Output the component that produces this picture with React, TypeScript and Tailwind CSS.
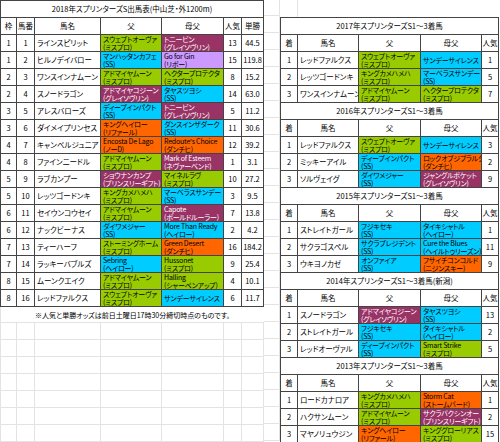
type Tone = 'g' | 'c' | 'm' | 'o' | 'p'
type Sire = [string, string | null, Tone]

const tone: Record<Tone, string> = {
  g: 'bg-[#99cc00] text-black',
  c: 'bg-[#00ccff] text-black',
  m: 'bg-[#993366] text-white',
  o: 'bg-[#ff6600] text-black',
  p: 'bg-[#cc99ff] text-black',
}

const entries: { waku: number; no: number; name: string; sire: Sire; bms: Sire; pop: number; odds: string }[] = [
  { waku: 1, no: 1, name: 'ラインスピリット', sire: ['スウェプトオーヴァ', 'ミスプロ', 'g'], bms: ['トニービン', 'グレイソヴリン', 'm'], pop: 13, odds: '44.5' },
  { waku: 1, no: 2, name: 'ヒルノデイバロー', sire: ['マンハッタンカフェ', 'SS', 'c'], bms: ['Go for Gin', 'リボー', 'p'], pop: 15, odds: '119.8' },
  { waku: 2, no: 3, name: 'ワンスインナムーン', sire: ['アドマイヤムーン', 'ミスプロ', 'g'], bms: ['ヘクタープロテクタ', 'ミスプロ', 'g'], pop: 8, odds: '15.2' },
  { waku: 2, no: 4, name: 'スノードラゴン', sire: ['アドマイヤコジーン', 'グレイソヴリン', 'm'], bms: ['タヤスツヨシ', 'SS', 'c'], pop: 14, odds: '63.0' },
  { waku: 3, no: 5, name: 'アレスバローズ', sire: ['ディープインパクト', 'SS', 'c'], bms: ['トニービン', 'グレイソヴリン', 'm'], pop: 5, odds: '11.2' },
  { waku: 3, no: 6, name: 'ダイメイプリンセス', sire: ['キングヘイロー', 'リファール', 'o'], bms: ['ダンスインザダーク', 'SS', 'c'], pop: 11, odds: '30.6' },
  { waku: 4, no: 7, name: 'キャンベルジュニア', sire: ['Encosta De Lago', 'ノーD', 'o'], bms: ["Redoute's Choice", 'ダンチヒ', 'o'], pop: 12, odds: '39.2' },
  { waku: 4, no: 8, name: 'ファインニードル', sire: ['アドマイヤムーン', 'ミスプロ', 'g'], bms: ['Mark of Esteem', 'ネヴァーベンド', 'm'], pop: 1, odds: '3.1' },
  { waku: 5, no: 9, name: 'ラブカンプー', sire: ['ショウナンカンプ', 'プリンスリーギフト', 'm'], bms: ['マイネルラヴ', 'ミスプロ', 'g'], pop: 10, odds: '27.2' },
  { waku: 5, no: 10, name: 'レッツゴードンキ', sire: ['キングカメハメハ', 'ミスプロ', 'g'], bms: ['マーベラスサンデー', 'SS', 'c'], pop: 3, odds: '9.5' },
  { waku: 6, no: 11, name: 'セイウンコウセイ', sire: ['アドマイヤムーン', 'ミスプロ', 'g'], bms: ['Capote', 'ボールドルーラー', 'm'], pop: 7, odds: '13.8' },
  { waku: 6, no: 12, name: 'ナックビーナス', sire: ['ダイワメジャー', 'SS', 'c'], bms: ['More Than Ready', 'ヘイロー', 'c'], pop: 2, odds: '4.2' },
  { waku: 7, no: 13, name: 'ティーハーフ', sire: ['ストーミングホーム', 'ミスプロ', 'g'], bms: ['Green Desert', 'ダンチヒ', 'o'], pop: 16, odds: '184.2' },
  { waku: 7, no: 14, name: 'ラッキーバブルズ', sire: ['Sebring', 'ヘイロー', 'c'], bms: ['Hussonet', 'ミスプロ', 'g'], pop: 9, odds: '25.4' },
  { waku: 8, no: 15, name: 'ムーンクエイク', sire: ['アドマイヤムーン', 'ミスプロ', 'g'], bms: ['Halling', 'シャーペンアップ', 'g'], pop: 4, odds: '10.1' },
  { waku: 8, no: 16, name: 'レッドファルクス', sire: ['スウェプトオーヴァ', 'ミスプロ', 'g'], bms: ['サンデーサイレンス', null, 'c'], pop: 6, odds: '11.7' },
]

const past: { title: string; rows: { name: string; sire: Sire; bms: Sire; pop: number }[] }[] = [
  {
    title: '2017年スプリンターズS1～3着馬',
    rows: [
      { name: 'レッドファルクス', sire: ['スウェプトオーヴァ', 'ミスプロ', 'g'], bms: ['サンデーサイレンス', null, 'c'], pop: 1 },
      { name: 'レッツゴードンキ', sire: ['キングカメハメハ', 'ミスプロ', 'g'], bms: ['マーベラスサンデー', 'SS', 'c'], pop: 5 },
      { name: 'ワンスインナムーン', sire: ['アドマイヤムーン', 'ミスプロ', 'g'], bms: ['ヘクタープロテクタ', 'ミスプロ', 'g'], pop: 7 },
    ],
  },
  {
    title: '2016年スプリンターズS1～3着馬',
    rows: [
      { name: 'レッドファルクス', sire: ['スウェプトオーヴァ', 'ミスプロ', 'g'], bms: ['サンデーサイレンス', null, 'c'], pop: 3 },
      { name: 'ミッキーアイル', sire: ['ディープインパクト', 'SS', 'c'], bms: ['ロックオブジブラルタル', 'ダンチヒ', 'o'], pop: 2 },
      { name: 'ソルヴェイグ', sire: ['ダイワメジャー', 'SS', 'c'], bms: ['ジャングルポケット', 'グレイソヴリン', 'm'], pop: 9 },
    ],
  },
  {
    title: '2015年スプリンターズS1～3着馬',
    rows: [
      { name: 'ストレイトガール', sire: ['フジキセキ', 'SS', 'c'], bms: ['タイキシャトル', 'ヘイロー', 'c'], pop: 1 },
      { name: 'サクラゴスペル', sire: ['サクラプレジデント', 'SS', 'c'], bms: ['Cure the Blues', 'ヘイルトゥリーズン', 'c'], pop: 11 },
      { name: 'ウキヨノカゼ', sire: ['オンファイア', 'SS', 'c'], bms: ['フサイチコンコルド', 'ニジンスキー', 'o'], pop: 9 },
    ],
  },
  {
    title: '2014年スプリンターズS1～3着馬(新潟)',
    rows: [
      { name: 'スノードラゴン', sire: ['アドマイヤコジーン', 'グレイソヴリン', 'm'], bms: ['タヤスツヨシ', 'SS', 'c'], pop: 13 },
      { name: 'ストレイトガール', sire: ['フジキセキ', 'SS', 'c'], bms: ['タイキシャトル', 'ヘイロー', 'c'], pop: 2 },
      { name: 'レッドオーヴァル', sire: ['ディープインパクト', 'SS', 'c'], bms: ['Smart Strike', 'ミスプロ', 'g'], pop: 5 },
    ],
  },
  {
    title: '2013年スプリンターズS1～3着馬',
    rows: [
      { name: 'ロードカナロア', sire: ['キングカメハメハ', 'ミスプロ', 'g'], bms: ['Storm Cat', 'ストームバード', 'o'], pop: 1 },
      { name: 'ハクサンムーン', sire: ['アドマイヤムーン', 'ミスプロ', 'g'], bms: ['サクラバクシンオー', 'プリンスリーギフト', 'm'], pop: 2 },
      { name: 'マヤノリュウジン', sire: ['キングヘイロー', 'リファール', 'o'], bms: ['キンググローリアス', 'ミスプロ', 'g'], pop: 15 },
    ],
  },
]

const cell = 'flex h-[17px] items-center overflow-hidden whitespace-nowrap border-b border-r border-[#444]'

function SireCell({ s }: { s: Sire }) {
  const [name, line, t] = s
  return (
    <div className={`${cell} flex-col !items-start justify-center pl-[2px] text-[7px] leading-[8px] tracking-[-0.2px] ${tone[t]}`}>
      <span>{name}</span>
      {line && <span>({line})</span>}
    </div>
  )
}

function Center({ children }: { children: React.ReactNode }) {
  return <div className={`${cell} justify-center`}>{children}</div>
}

export default function App() {
  return (
    <div className="flex h-[442px] w-[500px] overflow-hidden bg-white font-[family-name:'Noto_Sans_CJK_JP',sans-serif] text-[7.5px] leading-[10px] text-black [font-feature-settings:'palt']">
      {/* 出馬表 */}
      <div className="flex w-[264px] flex-col">
        <div className="grid grid-cols-[16px_18px_66px_61px_62px_18px_22px] border-l border-t border-[#444]">
          <div className={`${cell} col-span-7 h-[16px] justify-center`}>2018年スプリンターズS出馬表(中山芝・外1200m)</div>
          {['枠', '馬番', '馬名', '父', '母父', '人気', '単勝'].map((h) => (
            <Center key={h}>{h}</Center>
          ))}
          {entries.map((e) => (
            <div key={e.no} className="contents">
              <Center>{e.waku}</Center>
              <Center>{e.no}</Center>
              <div className={`${cell} pl-[2px]`}>{e.name}</div>
              <SireCell s={e.sire} />
              <SireCell s={e.bms} />
              <Center>{e.pop}</Center>
              <Center>{e.odds}</Center>
            </div>
          ))}
        </div>
        <div className="flex h-[16px] shrink-0 items-center justify-center border-b border-l border-[#e3e3e3] text-[7px]">
          ※人気と単勝オッズは前日土曜日17時30分締切時点のものです。
        </div>
        <div className="grid grid-cols-[16px_18px_66px_61px_62px_18px_22px] border-l border-[#e3e3e3]">
          {Array.from({ length: 56 }).map((_, i) => (
            <div key={i} className="h-[17px] border-b border-r border-[#e3e3e3]" />
          ))}
        </div>
      </div>

      {/* 空きセル */}
      <div className="flex w-[16px] flex-col">
        {Array.from({ length: 26 }).map((_, i) => (
          <div key={i} className={`${i === 0 ? 'h-[16px]' : 'h-[17px]'} shrink-0 border-b border-r border-[#e3e3e3]`} />
        ))}
      </div>

      {/* 過去の1～3着馬 */}
      <div className="flex w-[220px] flex-col">
        <div className="flex h-[17px] shrink-0">
          <div className="w-[18px] border-r border-[#e3e3e3]" />
        </div>
        <div className="grid w-[219px] grid-cols-[17px_61px_62px_61px_17px] border-l border-t border-[#444]">
          {past.map((sec) => (
            <div key={sec.title} className="contents">
              <div className={`${cell} col-span-5 justify-center`}>{sec.title}</div>
              {['着', '馬名', '父', '母父', '人気'].map((h) => (
                <Center key={h}>{h}</Center>
              ))}
              {sec.rows.map((r, i) => (
                <div key={r.name + i} className="contents">
                  <Center>{i + 1}</Center>
                  <div className={`${cell} pl-[2px]`}>{r.name}</div>
                  <SireCell s={r.sire} />
                  <SireCell s={r.bms} />
                  <Center>{r.pop}</Center>
                </div>
              ))}
            </div>
          ))}
        </div>
      </div>
    </div>
  )
}
